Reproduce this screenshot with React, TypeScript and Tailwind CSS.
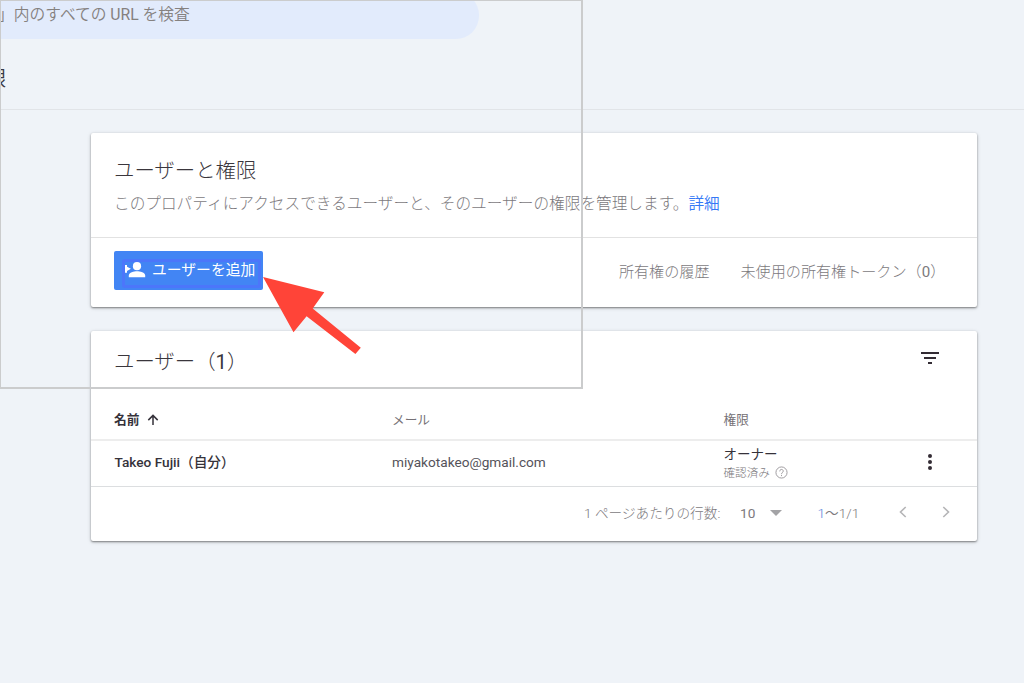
import type { ReactNode } from "react";

function Card({ children, className }: { children: ReactNode; className: string }) {
  return (
    <section
      className={
        "flex flex-col rounded-[2px] bg-white shadow-[0_1px_2px_rgba(0,0,0,0.42),0_1px_4px_rgba(0,0,0,0.16)] " +
        className
      }
    >
      {children}
    </section>
  );
}

function AddPersonIcon() {
  return (
    <svg viewBox="0 0 22 18" className="h-[18px] w-[22px] shrink-0" fill="white">
      <circle cx="13" cy="5.2" r="4.1" />
      <path d="M4.8 16.3v-1.9c0-2.7 5.2-4.1 8.2-4.1s8.2 1.400 8.200 4.100v1.900z" />
      <path d="M1 4.100h2v1.600L6.900 7.700 3 9.900v1.800H1z" />
    </svg>
  );
}

function SearchHeader() {
  return (
    <header className="flex h-[110px] shrink-0 flex-col overflow-hidden border-b border-[#e1e4e8]">
      <div className="-mt-2 flex h-[47px] w-[479px] shrink-0 items-center rounded-r-[23px] bg-[#e2ebfc] text-[15.750px] font-[350] text-[#85817f]">
        <span className="-ml-[2px] -mt-[1px] whitespace-pre leading-none">」内のすべての <span className="font-normal">URL</span> を検査</span>
      </div>
      <h1 className="-ml-[14px] mt-[28px] text-[20.300px] font-[350] leading-[24px] text-[#3c3a42]">限</h1>
    </header>
  );
}

function PermissionsCard() {
  return (
    <Card className="h-[174px] shrink-0">
      <div className="flex h-[105px] flex-col border-b border-[#e2e2e2] pl-[23px] pt-[25px]">
        <h2 className="text-[20.400px] leading-[26px] text-[#3a363c]">ユーザーと権限</h2>
        <p className="mt-[8px] whitespace-nowrap text-[15.660px] leading-[23px] text-[#7c797d]">
          このプロパティにアクセスできるユーザーと、そのユーザーの権限を管理します。<a className="font-[350] text-[#3478f6]">詳細</a>
        </p>
      </div>
      <div className="flex flex-1 items-center pl-[23px] text-[15.100px] text-[#7c797d]">
        <button className="-mt-[4px] flex h-[39px] w-[149px] items-center rounded-[2px] bg-[#4285f4] pl-[8px] font-normal text-white">
          <span className="mt-[5px] flex h-[29px] w-[139px] items-center rounded-[3px] border-[3px] border-[#4c76fa]">
            <span className="-ml-[1px] -mt-[6px]"><AddPersonIcon /></span>
            <span className="-mt-[6px] ml-[6px] whitespace-nowrap text-[14.800px] leading-[22px]">ユーザーを追加</span>
          </span>
        </button>
        <span className="ml-auto whitespace-nowrap">所有権の履歴</span>
        <span className="ml-[31px] mr-[32px] w-[204px] whitespace-nowrap">未使用の所有権トークン（<span className="font-normal">0</span>）</span>
      </div>
    </Card>
  );
}

function UsersCard() {
  return (
    <Card className="mt-[24px] h-[210px] shrink-0">
      <div className="flex h-[69px] items-center pl-[23px] pr-[38px]">
        <h2 className="-mt-[8px] text-[20.400px] leading-[26px] text-[#3a363c]">ユーザー（<span className="font-normal">1</span>）</h2>
        <svg viewBox="0 0 18 12" className="-mt-[15px] ml-auto h-3 w-[18px]" fill="#332c34">
          <path d="M0 0h18v2H0zM3 5h12v2H3zM7 10h4v2H7z" />
        </svg>
      </div>
      <div className="grid h-[41px] grid-cols-[278px_331.500px_1fr] items-center border-b-2 border-[#ededed] pl-[23px] text-[12.700px] text-[#757176]">
        <span className="flex items-center gap-[8px] font-bold text-[#35323a]">
          名前
          <svg viewBox="0 0 12 12" className="mt-[2px] h-3 w-3" fill="none" stroke="#35323a" strokeWidth="1.500">
            <path d="M6 11V1.500M1.300 6.100 6 1.400l4.700 4.700" />
          </svg>
        </span>
        <span className="font-normal">メール</span>
        <span className="font-normal">権限</span>
      </div>
      <div className="grid h-[46px] grid-cols-[277.500px_331.500px_204.500px_1fr] items-center border-b border-[#dcdee0] pb-[2px] pl-[23.500px] text-[13.650px] text-[#35323a]">
        <span className="whitespace-nowrap font-medium">Takeo Fujii（自分）</span>
        <span className="font-normal text-[#55535a]">miyakotakeo@gmail.com</span>
        <span className="flex flex-col">
          <span className="text-[13.500px] font-normal leading-[20px]">オーナー</span>
          <span className="flex items-center gap-[5px] text-[11.600px] leading-[18px] text-[#7c797d]">
            確認済み
            <svg viewBox="0 0 14 14" className="h-[13px] w-[13px]" fill="none" stroke="#99969a" strokeWidth="1">
              <circle cx="7" cy="7" r="6" />
              <path d="M5.100 5.800C5.100 3 8.900 3.100 8.900 5.500 8.900 7 7 6.900 7 8.800M7 9.700v1.200" />
            </svg>
          </span>
        </span>
        <svg viewBox="0 0 4 16" className="-mt-[2px] h-4 w-1" fill="#332c34">
          <circle cx="2" cy="2" r="2" />
          <circle cx="2" cy="8" r="2" />
          <circle cx="2" cy="14" r="2" />
        </svg>
      </div>
      <div className="flex flex-1 items-center pb-[2px] pl-[493px] text-[13.650px] text-[#7c797d]">
        <span className="w-[156px] whitespace-nowrap">1 ページあたりの行数:</span>
        <span className="w-[30px] font-normal">10</span>
        <svg viewBox="0 0 12 6" className="h-[6px] w-[12px]" fill="#a3a3a6"><path d="M0 0h12L6 6z" /></svg>
        <span className="ml-[35.500px] w-[81px] whitespace-nowrap font-[350]"><span className="text-[#5c88dc]">1</span>〜1/1</span>
        <svg viewBox="0 0 8 12" className="-mt-[2px] h-3 w-2" fill="none" stroke="#b5b5b7" strokeWidth="1.600"><path d="M6.700 1 1.500 6l5.200 5" /></svg>
        <svg viewBox="0 0 8 12" className="-mt-[2px] ml-[35px] h-3 w-2" fill="none" stroke="#b5b5b7" strokeWidth="1.600"><path d="m1.300 1 5.200 5-5.200 5" /></svg>
      </div>
    </Card>
  );
}

export default function App() {
  return (
    <div className="relative flex h-[683px] w-[1024px] flex-col overflow-hidden bg-[#eff3f8] font-['Roboto','Noto_Sans_CJK_JP',sans-serif] font-light">
      <SearchHeader />
      <main className="ml-[91px] mt-[23px] flex w-[885.500px] flex-col">
        <PermissionsCard />
        <UsersCard />
      </main>
      <div className="pointer-events-none absolute left-0 top-0 h-[389px] w-[583px] border-2 border-l border-t border-[#cbcccd]" />
      <svg viewBox="0 0 100 80" className="absolute left-[262px] top-[276px] h-[80px] w-[100px]" fill="#ff4438">
        <path d="M1 1 62.300 16.200 50.700 32.500 98.800 71.800 93.400 78 44.600 40.300 31.500 56.300z" />
      </svg>
    </div>
  );
}
